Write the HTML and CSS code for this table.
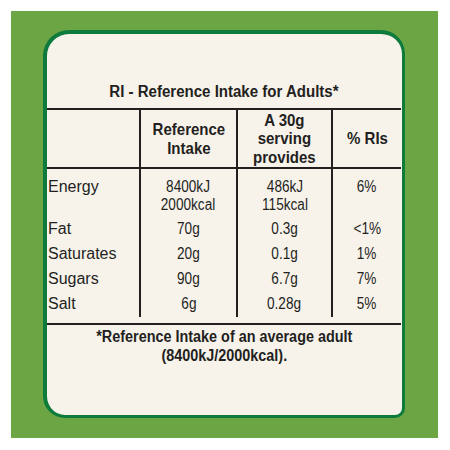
FILE: index.html
```html
<!DOCTYPE html>
<html lang="en">
<head>
    <meta charset="UTF-8">
    <title>RI - Reference Intake for Adults</title>
    <link rel="stylesheet" href="styles.css">
</head>
<body>
    <!-- Green pack background -->
    <div class="pack">
        <div class="label">
            <div class="title"><span class="nar">RI - Reference Intake for Adults*</span></div>
            <table class="ri-table">
                <tr class="head">
                    <td class="name"></td>
                    <td><span class="nar">Reference<br>Intake</span></td>
                    <td><span class="nar">A 30g<br>serving<br>provides</span></td>
                    <td><span class="nar">% RIs</span></td>
                </tr>
                <tr class="first">
                    <td class="name">Energy</td>
                    <td><span class="val">8400kJ<br>2000kcal</span></td>
                    <td><span class="val">486kJ<br>115kcal</span></td>
                    <td><span class="val">6%</span></td>
                </tr>
                <tr>
                    <td class="name">Fat</td>
                    <td><span class="val">70g</span></td>
                    <td><span class="val">0.3g</span></td>
                    <td><span class="val">&lt;1%</span></td>
                </tr>
                <tr>
                    <td class="name">Saturates</td>
                    <td><span class="val">20g</span></td>
                    <td><span class="val">0.1g</span></td>
                    <td><span class="val">1%</span></td>
                </tr>
                <tr>
                    <td class="name">Sugars</td>
                    <td><span class="val">90g</span></td>
                    <td><span class="val">6.7g</span></td>
                    <td><span class="val">7%</span></td>
                </tr>
                <tr>
                    <td class="name">Salt</td>
                    <td><span class="val">6g</span></td>
                    <td><span class="val">0.28g</span></td>
                    <td><span class="val">5%</span></td>
                </tr>
                <tr class="spacer">
                    <td></td><td></td><td></td><td></td>
                </tr>
            </table>
            <div class="note"><span class="nar">*Reference Intake of an average adult<br>(8400kJ/2000kcal).</span></div>
        </div>
    </div>
</body>
</html>
```

FILE: styles.css
```css
body {
    margin: 0;
    background-color: #fff;
    font-family: "Liberation Sans", Arial, sans-serif;
    color: #231f1e;
}
.pack {
    margin: 11px;
    width: 427px;
    height: 427px;
    background-color: #6ca644;
    padding: 19px 33px 0 32px;
    box-sizing: border-box;
}
.label {
    width: 362px;
    height: 388px;
    box-sizing: border-box;
    background-color: #f8f3ea;
    border: 3px solid #0d7b3b;
    border-top-width: 4px;
    border-left-width: 4px;
    border-radius: 26px 24px 10px 22px;
    padding: 0 1px 0 0;
}
/* narrow type, the label uses a condensed face */
.nar {
    display: inline-block;
    transform: scaleX(0.91);
}
.val {
    display: inline-block;
    transform: scaleX(0.85);
}
.title {
    text-align: center;
    font-weight: bold;
    font-size: 16px;
    line-height: 20px;
    padding-top: 48px;
    padding-bottom: 6px;
    border-bottom: 2px solid #231f1e;
}
.title .nar {
    transform: scaleX(0.94);
}
.ri-table {
    width: 100%;
    border-collapse: collapse;
    font-size: 16px;
}
.ri-table td {
    text-align: center;
    vertical-align: top;
    padding: 3.5px 0;
    line-height: 18px;
    border-left: 2px solid #231f1e;
}
.ri-table td.name {
    text-align: left;
    padding-left: 1px;
    border-left: none;
    width: 91px;
}
.ri-table td:nth-child(2) {
    width: 95px;
}
.ri-table td:nth-child(3) {
    width: 93px;
}
.head td {
    font-weight: bold;
    font-size: 16.5px;
    height: 57px;
    padding: 0;
    vertical-align: middle;
    line-height: 18.5px;
    border-bottom: 2px solid #231f1e;
}
.first td {
    padding-top: 9px;
    line-height: 17.5px;
}
.spacer td {
    height: 6px;
    padding: 0;
    border-left: none;
    border-bottom: 2px solid #231f1e;
}
.note {
    text-align: center;
    font-weight: bold;
    font-size: 16px;
    line-height: 19px;
    padding-top: 2px;
    padding-left: 1px;
}
.note .nar {
    transform: scaleX(0.9);
}
```
